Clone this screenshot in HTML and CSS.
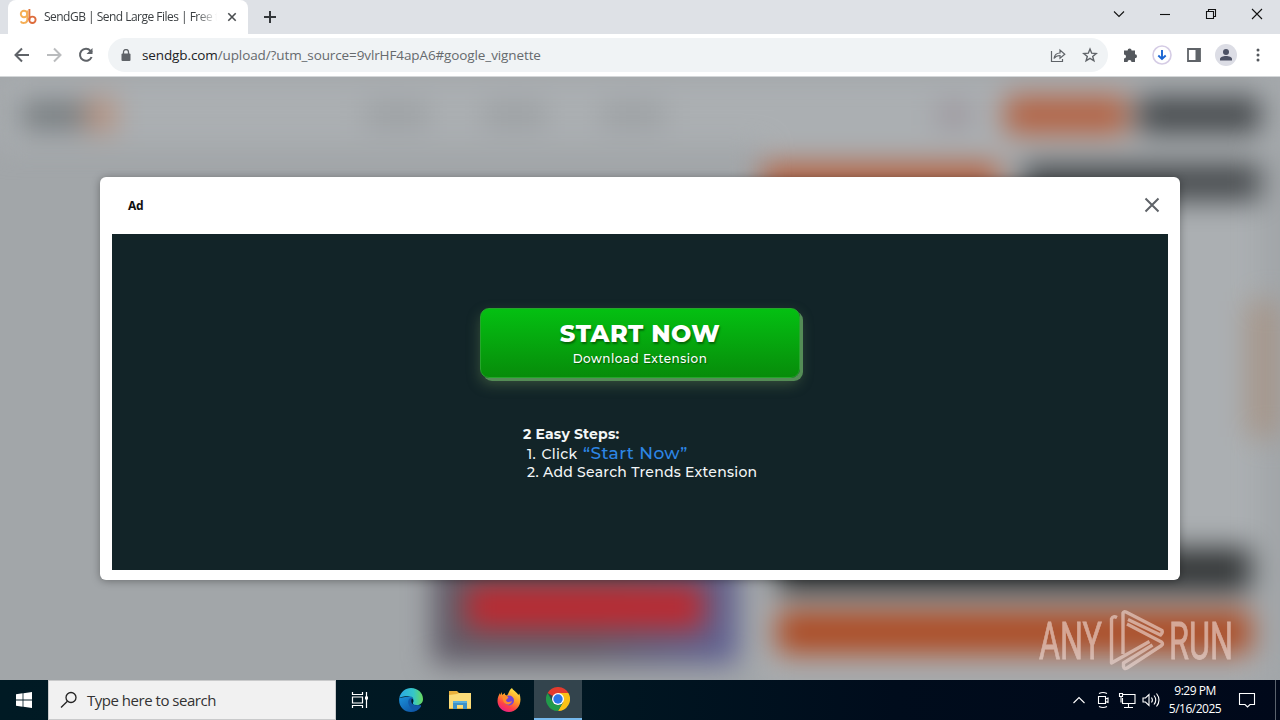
FILE: index.html
```html
<!DOCTYPE html>
<html lang="en">
<head>
  <meta charset="UTF-8" />
  <meta name="viewport" content="width=device-width, initial-scale=1.0" />
  <title>SendGB | Send Large Files | Free</title>
  <link rel="stylesheet" href="styles.css">
</head>
<body>
  <div class="desktop">
    <!-- Tab strip -->
    <div class="tab-strip">
      <div class="tab">
        <svg class="favicon" width="18" height="18" viewBox="0 0 18 18" fill="none" stroke-width="1.9">
          <circle cx="5" cy="6" r="3.200" stroke="#f5ae55" />
          <path d="M8.300 2.500v9.200c0 4-5.500 4-6.600 1.600" stroke="#f5ae55" />
          <path d="M10.400 1v11" stroke="#e2793f" />
          <circle cx="13.400" cy="11.800" r="3.200" stroke="#dd6b3b" />
        </svg>
        <span class="tab-title">SendGB | Send Large Files | Free t</span>
        <svg class="tab-close" width="10" height="10" viewBox="0 0 10 10" stroke="#4a4d50" stroke-width="1.600"><path d="M1.300 1.300l7.400 7.400M8.700 1.300L1.300 8.700" /></svg>
      </div>
      <svg class="new-tab" width="14" height="14" viewBox="0 0 14 14" stroke="#33363a" stroke-width="2"><path d="M7 1v12M1 7h12" /></svg>
      <div class="window-controls">
        <svg width="46" height="28" viewBox="0 0 46 28"><path d="M18 11.500l5 5 5-5" /></svg>
        <svg width="46" height="28" viewBox="0 0 46 28"><path d="M18 14.500h10" /></svg>
        <svg width="46" height="28" viewBox="0 0 46 28"><path d="M18.500 11.500h7v7h-7zM20.500 11V9.500h7v7H26" /></svg>
        <svg width="46" height="28" viewBox="0 0 46 28"><path d="M18 9l10 10M28 9L18 19" /></svg>
      </div>
    </div>

    <!-- Toolbar -->
    <div class="toolbar">
      <div class="nav-icons">
        <svg width="16" height="16" viewBox="0 0 16 16" stroke="#5f6368"><path d="M15 8H2M8 1.500L1.500 8 8 14.500" /></svg>
        <svg width="16" height="16" viewBox="0 0 16 16" stroke="#babcbe"><path d="M1 8h13M8 1.500L14.500 8 8 14.500" /></svg>
        <svg width="16" height="16" viewBox="0 0 16 16" stroke="#5f6368"><path d="M13.600 10A6 6 0 1 1 12.500 3.800L14 5.500" /><path d="M14.500 1v6h-6z" fill="#5f6368" stroke="none" /></svg>
      </div>
      <div class="omnibox">
        <svg width="10" height="13" viewBox="0 0 10 13"><rect x=".5" y="4.500" width="9" height="7.500" rx="1" fill="#5f6368" /><path d="M2.500 5V3a2.500 2.500 0 0 1 5 0v2" fill="none" stroke="#5f6368" stroke-width="1.300" /></svg>
        <span class="url"><b>sendgb.com</b>/upload/?utm_source=9vlrHF4apA6#google_vignette</span>
        <svg class="share" width="16" height="16" viewBox="0 0 16 16" fill="none" stroke="#5f6368" stroke-width="1.200"><path d="M1.500 4v10.500h11V12M4 11.500c.5-3.500 2.500-5.500 6-5.500V3l4.800 4.200L10 11.300V8.500c-2.500 0-4.500.8-6 3z" /></svg>
        <svg class="star" width="16" height="16" viewBox="0 0 16 16" fill="none" stroke="#5f6368" stroke-width="1.400"><path d="M8 2l1.700 4.200 4.500.3-3.500 2.900 1.200 4.400L8 11.400l-3.900 2.400 1.200-4.400L1.800 6.500l4.500-.3z" /></svg>
      </div>
      <div class="extensions">
        <svg width="32" height="16" viewBox="0 0 16 16" fill="#54585d"><path d="M2 3.500h3.600a2 2 0 1 1 4 0H13v3.700a2 2 0 1 1 0 4V15H9.500a2 2 0 0 0-4 0H2v-3.600a2 2 0 0 0 0-4z" /></svg>
        <svg width="32" height="20" viewBox="0 0 20 20" fill="none"><circle cx="10" cy="10" r="9" stroke="#d5cce5" stroke-width="1.600" /><path d="M10 5v9M6.300 10.500L10 14l3.700-3.500" stroke="#1a66d2" stroke-width="1.900" /></svg>
        <svg width="32" height="14" viewBox="0 0 14 14"><path d="M1 1h12v12H1z" fill="none" stroke="#5f6368" stroke-width="1.800" /><path d="M8.500 1H13v12H8.500z" fill="#5f6368" /></svg>
        <svg width="32" height="22" viewBox="0 0 22 22"><circle cx="11" cy="11" r="11" fill="#dcdde5" /><circle cx="11" cy="8" r="3" fill="#4c5164" /><path d="M5 16.500v-1.500c0-2 3-3 6-3s6 1 6 3v1.500z" fill="#4c5164" /></svg>
        <svg width="32" height="14" viewBox="0 0 4 14" fill="#54585d"><circle cx="2" cy="2" r="1.500" /><circle cx="2" cy="7" r="1.500" /><circle cx="2" cy="12" r="1.500" /></svg>
      </div>
    </div>

    <!-- Page -->
    <div class="viewport">
      <div class="site">
        <div class="site-header">
          <div class="site-logo"><i></i><i></i></div>
          <div class="site-nav"><i></i><i></i><i></i></div>
          <div class="site-lang"></div>
          <div class="site-btn orange"></div>
          <div class="site-btn dark"></div>
        </div>
        <div class="site-body">
          <div class="site-card"><div class="site-red"></div></div>
          <div class="site-panel">
            <div class="panel-tabs"><i class="orange"></i><i class="dark"></i></div>
            <div class="panel-bar dark"></div>
            <div class="panel-bar orange"></div>
          </div>
          <div class="side-tab"></div>
        </div>
      </div>

      <div class="ad">
        <div class="ad-header">
          <span>Ad</span>
          <svg width="16" height="16" viewBox="0 0 16 16" stroke="#5f6368" stroke-width="2"><path d="M1.500 1.500l13 13M14.500 1.500l-13 13" /></svg>
        </div>
        <div class="ad-body">
          <div class="start-btn">
            <div class="start-title">START NOW</div>
            <div class="start-sub">Download Extension</div>
          </div>
          <div class="steps">
            <div class="steps-title">2 Easy Steps:</div>
            <div class="step step-one">1. Click <span>“Start Now”</span></div>
            <div class="step step-two">2. Add Search Trends Extension</div>
          </div>
        </div>
      </div>

      <svg class="watermark" width="210" height="70" viewBox="0 0 210 70">
        <text x="3" y="54" textLength="63" lengthAdjust="spacingAndGlyphs">ANY</text>
        <g fill="none" stroke-linejoin="round">
          <path d="M81 12.500q-4-2-5.500 1.500v44l38-21.500" />
          <path d="M87 49V8q1-2 3-1l36 18.500q1 2-1.500 4.500L92 14.500" />
          <path d="M91 19l34.500 18q2 2 0 3.500L91 63q-3 1.500-3.500-1.500V58l29-18" />
        </g>
        <text x="133" y="54" textLength="64" lengthAdjust="spacingAndGlyphs">RUN</text>
      </svg>
    </div>

    <!-- Taskbar -->
    <div class="taskbar">
      <div class="task">
        <svg width="16" height="16" viewBox="0 0 16 16" fill="#fff"><path d="M0 2.200l6.600-.9v6.300H0zM7.400 1.200L16 0v7.600H7.400zM0 8.400h6.600v6.300L0 13.800zM7.400 8.400H16V16l-8.600-1.200z" /></svg>
      </div>
      <div class="search">
        <svg width="18" height="18" viewBox="0 0 18 18" fill="none" stroke="#222" stroke-width="1.300"><circle cx="11" cy="6.500" r="5" /><path d="M7.400 10.200L1 16.500" /></svg>
        <span>Type here to search</span>
      </div>
      <div class="task">
        <svg width="18" height="16" viewBox="0 0 18 16" fill="none" stroke="#fff" stroke-width="1.200"><path d="M1.500 0v2.500h10V0M1.500 16v-2.500h10V16M1.500 5h10v6h-10zM15.500 0v16" /><path d="M14 4.500h3v3h-3z" fill="#fff" stroke="none" /></svg>
      </div>
      <div class="task wide">
        <svg width="24" height="24" viewBox="0 0 24 24">
          <defs>
            <linearGradient id="edgeTop" x1="0" x2="1"><stop offset="0" stop-color="#2aa7e4" /><stop offset=".6" stop-color="#36c6c8" /><stop offset="1" stop-color="#68d95c" /></linearGradient>
            <linearGradient id="edgeLow" x1="0" x2="1" y2="1"><stop offset="0" stop-color="#1b93dc" /><stop offset="1" stop-color="#0c4a9c" /></linearGradient>
          </defs>
          <path d="M.3 10C-1 18 5 24 12 24c4 0 7.800-2 9.700-5.300.8-1.300 0-1.700-1-1.300L12 8z" fill="url(#edgeLow)" />
          <path d="M.3 10C1.500 4 6.500 0 12 0c7 0 12 5 12 11 0 4-3 6-6.300 6-3.200 0-4.200-1.200-3.700-2.200 1.500-2 .8-6.800-5-6.800C5 8 1.500 9 .3 10z" fill="url(#edgeTop)" />
          <path d="M12.500 9.500c-3 .7-4 4-2.800 7 1.500 4 5 6.500 8 5.500 1.700-.8 3-1.700 4-3.300.8-1.300 0-1.700-1-1.300-3 1-8 .5-7.700-3 1-2 .5-3.500-.5-4.900z" fill="#1259a8" />
          <path d="M13.300 10.500c-1.500 1-1.300 4 .2 5.500 2 2 5.500 2.200 8.500 1l-1.200.4c-3 .8-7 0-7-2.500.9-1.300.7-3-.5-4.400z" fill="#001a24" />
        </svg>
      </div>
      <div class="task wide">
        <svg width="22" height="20" viewBox="0 0 22 20"><path d="M0 1h8l2 2h12v16H0z" fill="#e9b13d" /><path d="M0 5l8-1 2-1h12v15H0z" fill="#fbdc79" /><path d="M4 19v-8h14v8h-4v-4H8v4z" fill="#3f92c9" /><path d="M4 11h14v2H4z" fill="#5bb0df" /></svg>
      </div>
      <div class="task wide">
        <svg width="24" height="24" viewBox="0 0 24 24">
          <defs><linearGradient id="fox" x1=".8" y1="0" x2=".3" y2="1"><stop offset="0" stop-color="#fff04a" /><stop offset=".45" stop-color="#ff9a25" /><stop offset=".75" stop-color="#ff4047" /><stop offset="1" stop-color="#e91e88" /></linearGradient></defs>
          <path d="M15 0c1 2.500 5 4 6.300 7l1-1.500C26 15 20.500 24 12 24 5 24 .5 18.500.5 13c0-4 1.500-6 2.500-8l.4 2L5 4v3l3-2c-.4 1.600.4 2.300 2 2.600C12 5 12 2 15 0z" fill="url(#fox)" />
          <circle cx="12" cy="12.500" r="5" fill="#7442d6" />
          <path d="M5 8c2-1 5-.5 6.500 1.500L9 12c0 2 3 3 6 1-1 5-8 4.500-9-1z" fill="#ff8b29" />
        </svg>
      </div>
      <div class="task active">
        <svg width="24" height="24" viewBox="0 0 24 24">
          <path d="M12 12L1.600 6A12 12 0 0 1 22.400 6z" fill="#e33b2e" />
          <path d="M12 6h10.400A12 12 0 0 1 12 24l5.200-9z" fill="#fbc116" />
          <path d="M1.600 6l5.200 9A6 6 0 0 0 17.200 15L12 24A12 12 0 0 1 1.600 6z" fill="#219a4a" />
          <circle cx="12" cy="12" r="6" fill="#fff" /><circle cx="12" cy="12" r="4.700" fill="#2a76e8" />
        </svg>
      </div>
      <div class="tray">
        <svg width="24" height="20" viewBox="0 0 24 20"><path d="M6.500 13l5.500-5.500 5.500 5.500" /></svg>
        <svg width="24" height="20" viewBox="0 0 24 20"><path d="M7.500 6.500h7v7h-7zM14.500 9l2.500-1v4.500l-2.500-1M8 3.500q4-2 8 0M8 16.500q4 2 8 0" /></svg>
        <svg width="24" height="20" viewBox="0 0 24 20"><path d="M8 4.500h12v9H7.500V8M13.500 13.500v4M9 17.500h9M4.500 3.500h3v3h-3zM6 6.500v6" /></svg>
        <svg width="24" height="20" viewBox="0 0 24 20"><path d="M4 8h2.500L10 4.500v11L6.500 12H4zM12.500 7.500q1.800 2.500 0 5M15 5.500q3.500 4.500 0 9M17.500 3.500q5 6.500 0 13" /></svg>
        <div class="clock"><div>9:29 PM</div><div>5/16/2025</div></div>
        <svg class="notice" width="18" height="18" viewBox="0 0 18 18"><path d="M1.500 2.500h15v11H12L9.500 16 7 13.500H1.500z" /></svg>
        <div class="show-desktop"></div>
      </div>
    </div>
  </div>
</body>
</html>
```
FILE: styles.css
```css
* {
  box-sizing: border-box;
}

body {
  margin: 0;
  overflow: hidden;
  font-family: "Open Sans", "Noto Sans", sans-serif;
}

svg {
  display: block;
  flex: none;
}

.desktop {
  width: 1280px;
  height: 720px;
  display: flex;
  flex-direction: column;
}

/* Tab strip */
.tab-strip {
  height: 34px;
  display: flex;
  background: #dee1e6;
  padding-left: 8px;
}

.tab {
  width: 240px;
  height: 34px;
  display: flex;
  align-items: center;
  padding: 0 11px;
  background: #fff;
  border-radius: 8px 8px 0 0;
}

.tab-title {
  width: 173px;
  margin: -1px 0 0 7px;
  overflow: hidden;
  white-space: nowrap;
  font-size: 12px;
  letter-spacing: -0.52px;
  color: #3c4043;
  -webkit-mask-image: linear-gradient(to right, #000 88%, transparent 100%);
  mask-image: linear-gradient(to right, #000 88%, transparent 100%);
}

.tab-close {
  margin-left: 10px;
}

.new-tab {
  margin: 10px 0 0 15px;
}

.window-controls {
  display: flex;
  margin-left: auto;
  fill: none;
  stroke: #111;
  stroke-width: 1.1;
}

/* Toolbar */
.toolbar {
  height: 43px;
  display: flex;
  align-items: center;
  background: #fff;
  border-bottom: 1px solid #d4d7d9;
}

.nav-icons {
  width: 108px;
  padding-left: 14px;
  display: flex;
  gap: 16px;
  fill: none;
  stroke-width: 2;
}

.omnibox {
  width: 1000px;
  height: 34px;
  display: flex;
  align-items: center;
  padding: 0 10px 0 13px;
  border-radius: 17px;
  background: #f0f3f5;
}

.url {
  margin-left: 11px;
  font-size: 13.5px;
  letter-spacing: -0.11px;
  white-space: nowrap;
  color: #666a6e;
}

.url b {
  font-weight: 400;
  color: #202124;
}

.share {
  margin-left: auto;
}

.star {
  margin-left: 16px;
}

.extensions {
  flex: 1;
  display: flex;
  align-items: center;
  padding-left: 6px;
}

/* Page behind the ad */
.viewport {
  position: relative;
  height: 603px;
  overflow: hidden;
  background: #a2a6a9;
}

.site {
  height: 603px;
  filter: blur(14px);
}

.site .orange {
  background: #b36344;
}

.site .dark {
  background: #484c4f;
}

.site-header {
  height: 70px;
  display: flex;
  align-items: center;
  padding: 6px 18px 0 22px;
  background: #abafb2;
}

.site-logo {
  display: flex;
  align-items: center;
  width: 343px;
}

.site-logo i {
  width: 64px;
  height: 28px;
  background: #747a7d;
}

.site-logo i + i {
  width: 30px;
  height: 34px;
  background: #b8927f;
}

.site-nav {
  display: flex;
  gap: 54px;
  width: 572px;
}

.site-nav i {
  width: 64px;
  height: 22px;
  background: #9a9ea1;
}

.site-lang {
  width: 34px;
  height: 24px;
  background: #9d969d;
}

.site-btn {
  width: 123px;
  height: 38px;
  margin-left: 10px;
  border-radius: 5px;
}

.site-btn.orange {
  margin-left: 34px;
}

.site-body {
  height: 533px;
  display: flex;
}

.site-card {
  width: 306px;
  height: 417px;
  margin: 100px 0 0 432px;
  display: flex;
  align-items: flex-end;
  padding: 0 34px 35px;
  background: linear-gradient(110deg, #625d69 65%, #606297);
  border-radius: 8px;
}

.site-red {
  width: 238px;
  height: 44px;
  background: #bb2a31;
  border-radius: 6px;
}

.site-panel {
  width: 500px;
  height: 533px;
  margin-left: 24px;
  padding-top: 16px;
  background: #abafb2;
}

.panel-tabs {
  display: flex;
  justify-content: space-between;
  margin-bottom: 347px;
}

.panel-tabs i {
  width: 238px;
  height: 38px;
  border-radius: 5px;
}

.panel-bar {
  width: 474px;
  height: 44px;
  margin: 0 0 18px 15px;
  border-radius: 5px;
}

.site .panel-bar.dark {
  background: #343738;
}

.site .panel-bar.orange {
  background: #ac4c25;
}

.side-tab {
  width: 34px;
  height: 136px;
  margin: 154px 0 0 -14px;
  background: #a6968a;
}

/* Interstitial ad */
.ad {
  position: absolute;
  top: 100px;
  left: 100px;
  width: 1080px;
  height: 403px;
  padding: 0 12px;
  background: #fff;
  border-radius: 6px;
  box-shadow: 0 1px 8px rgba(0, 0, 0, 0.35);
}

.ad-header {
  height: 57px;
  display: flex;
  align-items: center;
  justify-content: space-between;
  padding: 0 8px 1px 16px;
  font: bold 12px "Noto Sans", sans-serif;
  letter-spacing: -0.3px;
  color: #111;
}

.ad-body {
  height: 336px;
  padding-top: 74px;
  background: #122428;
  font-family: Montserrat, Inter, sans-serif;
  color: #f2f6f7;
}

.start-btn {
  width: 320px;
  height: 70px;
  margin: 0 auto;
  padding-top: 9px;
  border: 1px solid #27a52d;
  border-radius: 9px;
  background: linear-gradient(#04c012, #078c0a);
  box-shadow: 3px 3px 0 #548c56, 0 6px 14px rgba(112, 150, 90, 0.4);
  text-align: center;
  color: #fff;
}

.start-title {
  font-size: 24px;
  font-weight: 800;
  line-height: 32px;
  letter-spacing: 0.5px;
  text-shadow: 1px 2px 2px rgba(0, 40, 0, 0.5);
}

.start-sub {
  font-size: 12px;
  font-weight: 500;
  line-height: 18px;
  letter-spacing: 0.5px;
  text-shadow: 1px 1px 1px rgba(0, 40, 0, 0.5);
}

.steps {
  width: 240px;
  margin: 47px 0 0 411px;
  white-space: nowrap;
}

.steps-title {
  font-size: 14px;
  font-weight: 700;
  line-height: 19px;
  letter-spacing: 0.15px;
}

.step {
  padding-left: 4px;
  font-size: 14px;
  font-weight: 500;
  line-height: 19px;
}

.step-one {
  letter-spacing: 0.3px;
  word-spacing: 1.5px;
}

.step-one span {
  font-size: 17px;
  letter-spacing: 0.4px;
  word-spacing: 0;
  color: #2d86e5;
}

.step-two {
  line-height: 17px;
  letter-spacing: 0.27px;
}

/* Watermark */
.watermark {
  position: absolute;
  right: 34px;
  bottom: 5px;
  opacity: 0.6;
  stroke: #f1dcd6;
  stroke-width: 3.4;
}

.watermark text {
  font: 400 51px Roboto, sans-serif;
  fill: #f1dcd6;
  stroke-width: 0.8;
}

/* Taskbar */
.taskbar {
  height: 40px;
  display: flex;
  background: linear-gradient(to right, #001a24 0, #001722 45%, #000c1c 70%, #00081a);
}

.task {
  width: 48px;
  display: flex;
  align-items: center;
  justify-content: center;
}

.task.wide {
  width: 49px;
}

.task.wide:nth-child(4) {
  margin-left: 3px;
  padding-right: 2px;
}

.task.wide:nth-child(5) {
  padding-right: 1px;
}

.task.wide:nth-child(6) {
  padding-right: 2px;
}

.task.active {
  background: #33444d;
  border-bottom: 2px solid #76b9ed;
}

.search {
  width: 288px;
  display: flex;
  align-items: center;
  padding-left: 11px;
  background: #f1f1f1;
  border: 1px solid #c9cacb;
}

.search span {
  margin-left: 9px;
  font-size: 15px;
  letter-spacing: -0.48px;
  color: #333;
}

.tray {
  display: flex;
  align-items: center;
  margin-left: auto;
  fill: none;
  stroke: #fff;
  stroke-width: 1.1;
}

.clock {
  width: 64px;
  font-size: 12px;
  line-height: 18px;
  letter-spacing: -0.5px;
  text-align: center;
  color: #fff;
}

.notice {
  margin: 0 19px 0 11px;
}

.show-desktop {
  width: 5px;
  height: 40px;
  border-left: 1px solid #5a626d;
}
```
